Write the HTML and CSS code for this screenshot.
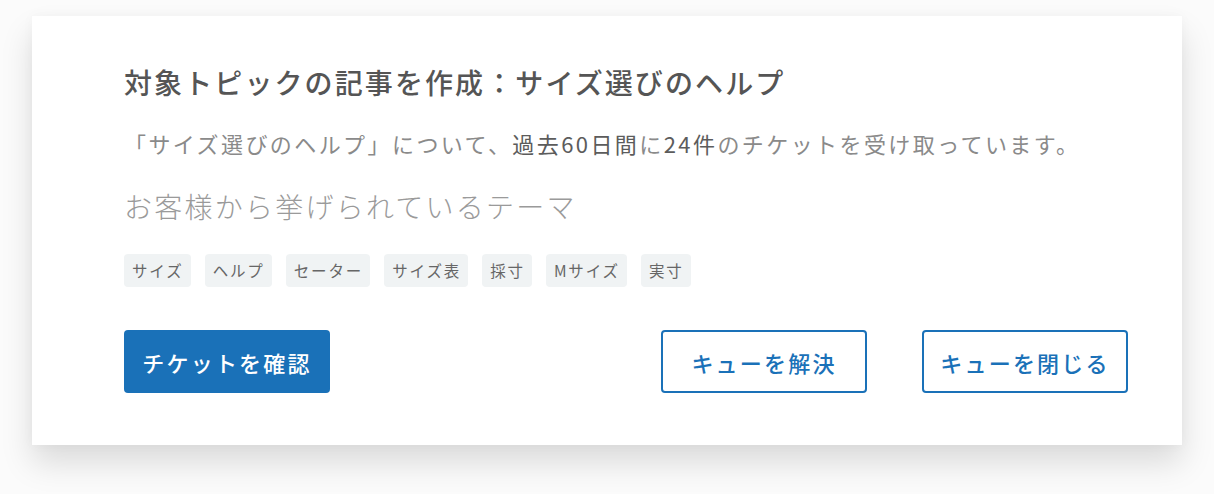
FILE: index.html
```html
<!DOCTYPE html>
<html lang="ja">
<head>
  <meta charset="utf-8">
  <title>記事作成の提案</title>
  <link rel="stylesheet" href="styles.css">
</head>
<body>
  <div class="card">
    <h2 class="title">対象トピックの記事を作成：サイズ選びのヘルプ</h2>
    <p class="desc">「サイズ選びのヘルプ」について、<b>過去60日間</b>に<b>24件</b>のチケットを受け取っています。</p>
    <h3 class="subtitle">お客様から挙げられているテーマ</h3>
    <div class="tags">
      <span class="tag">サイズ</span>
      <span class="tag">ヘルプ</span>
      <span class="tag">セーター</span>
      <span class="tag">サイズ表</span>
      <span class="tag">採寸</span>
      <span class="tag">Mサイズ</span>
      <span class="tag">実寸</span>
    </div>
    <div class="actions">
      <button class="btn primary">チケットを確認</button>
      <div class="right">
        <button class="btn outline">キューを解決</button>
        <button class="btn outline">キューを閉じる</button>
      </div>
    </div>
  </div>
</body>
</html>
```

FILE: styles.css
```css
html { background: #fbfbfb; }
body { margin: 0; min-height: 494px; box-sizing: border-box; padding: 16px 32px 49px; background: #fbfbfb; font-family: "Noto Sans CJK JP", "Noto Sans", sans-serif; letter-spacing: 0.15em; }
.card { width: 1150px; box-sizing: border-box; background: #fff; padding: 48px 54px 52px 92px; box-shadow: 0 18px 30px rgba(0, 0, 0, 0.13), 0 0 12px rgba(0, 0, 0, 0.03); }
.title { margin: 0; font-size: 28px; line-height: 36px; font-weight: 500; color: #555; letter-spacing: 0.075em; }
.desc { margin: 28px 0 0; font-size: 22px; line-height: 30px; color: #8a8a8a; letter-spacing: 0.11em; }
.desc b { font-weight: 400; color: #5c5c5c; }
.subtitle { margin: 30px 0 0; font-size: 28px; line-height: 36px; font-weight: 300; color: #9a9a9a; letter-spacing: 0.08em; }
.tags { display: flex; gap: 14px; margin-top: 30px; }
.tag { height: 33px; line-height: 33px; padding: 0 7px 0 8px; background: #f0f3f4; border-radius: 4px; font-size: 15.5px; color: #666; letter-spacing: 0.12em; }
.actions { display: flex; justify-content: space-between; margin-top: 43px; }
.right { display: flex; gap: 55px; }
.btn { width: 206px; height: 63px; border-radius: 4px; font-family: inherit; font-size: 22px; font-weight: 500; letter-spacing: 0.1em; cursor: pointer; }
.primary { background: #1a71b8; color: #fff; border: none; }
.outline { background: #fff; color: #1a71b8; border: 2px solid #1a71b8; }
```
